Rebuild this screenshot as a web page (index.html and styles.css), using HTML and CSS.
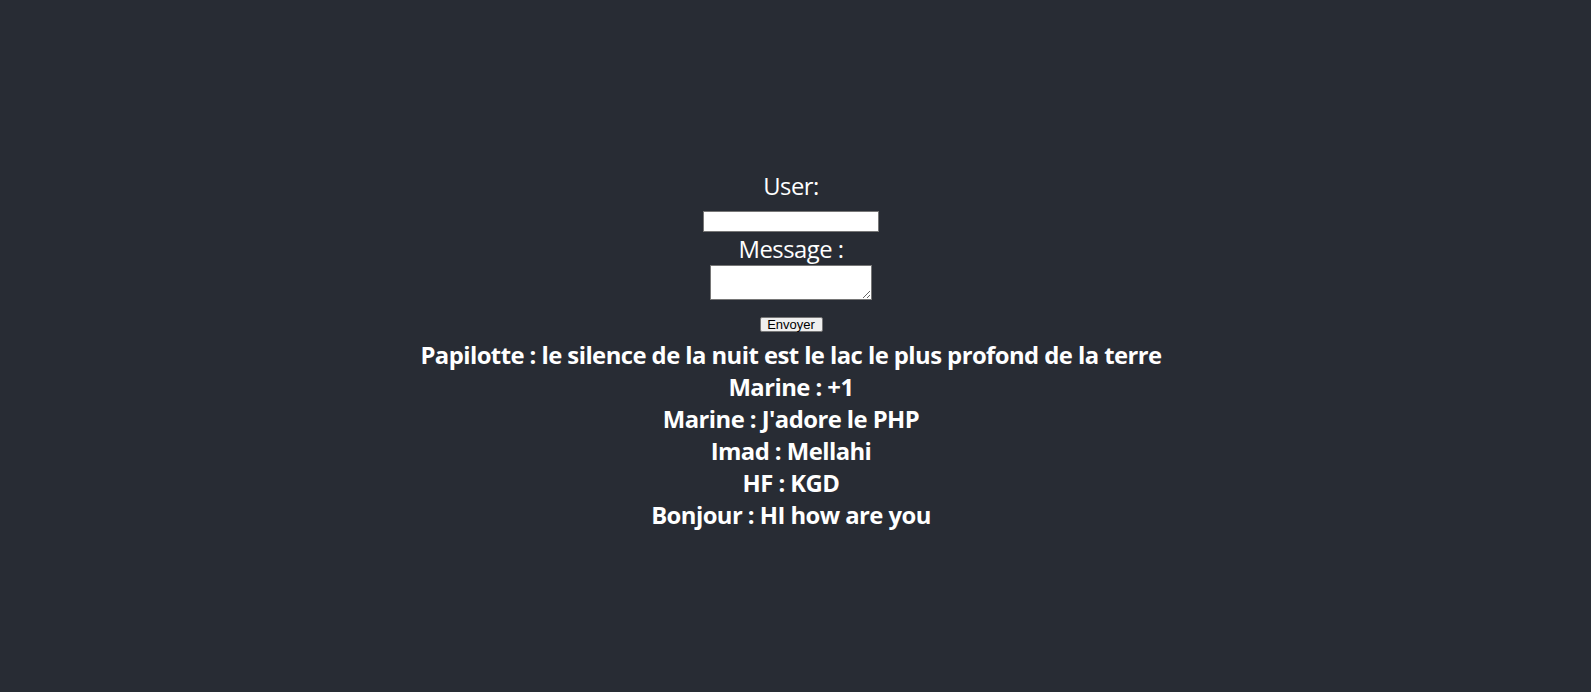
FILE: index.html
```html
<!DOCTYPE html>
<html lang="fr">
<head>
<meta charset="utf-8">
<title>Chat</title>
<link rel="stylesheet" href="styles.css">
</head>
<body>
<div class="app">
  <header class="app-header">
    <form class="chat-form">
      <label class="field-label" for="user">User:</label>
      <input class="user-input" id="user" type="text">
      <label class="field-label message-label" for="message">Message :</label>
      <textarea class="message-input" id="message"></textarea>
      <button class="send-button" type="button">Envoyer</button>
    </form>
    <div class="messages">
      <div class="message">Papilotte : le silence de la nuit est le lac le plus profond de la terre</div>
      <div class="message">Marine : +1</div>
      <div class="message">Marine : J'adore le PHP</div>
      <div class="message">Imad : Mellahi</div>
      <div class="message">HF : KGD</div>
      <div class="message">Bonjour : HI how are you</div>
    </div>
  </header>
</div>
</body>
</html>
```
FILE: styles.css
```css
html, body {
  margin: 0;
  padding: 0;
  background: #282c34;
}

.app {
  text-align: center;
}

.app-header {
  min-height: 100vh;
  box-sizing: border-box;
  padding: 8px 9px 0 0;
  display: flex;
  flex-direction: column;
  align-items: center;
  justify-content: center;
  background-color: #282c34;
  color: #ffffff;
  font-family: "Open Sans", "Noto Sans", "Liberation Sans", sans-serif;
  font-size: 23.84px;
  letter-spacing: -0.5px;
}

.chat-form {
  display: flex;
  flex-direction: column;
  align-items: center;
  margin: 0;
}

.field-label {
  display: block;
  line-height: 32px;
  height: 32px;
}

.user-input {
  box-sizing: border-box;
  width: 176px;
  height: 21px;
  margin: 9px 0 0 0;
  padding: 1px 2px;
  border: 1px solid #767676;
  background: #ffffff;
  font: 13.33px "Liberation Sans", Arial, sans-serif;
  letter-spacing: normal;
}

.message-label {
  margin-top: 1px;
}

.message-input {
  box-sizing: border-box;
  width: 162px;
  height: 35px;
  margin: 0;
  padding: 2px;
  border: 1px solid #767676;
  background: #ffffff;
  font: 13.33px "Liberation Mono", monospace;
  letter-spacing: normal;
}

.send-button {
  box-sizing: border-box;
  width: 63px;
  height: 15px;
  margin-top: 17px;
  padding: 0 6px;
  border: 1px solid #767676;
  border-radius: 2px;
  background: #efefef;
  color: #000000;
  font: 13px/13px "Liberation Sans", Arial, sans-serif;
  letter-spacing: normal;
}

.messages {
  margin-top: 7px;
}

.message {
  font-weight: 700;
  line-height: 32px;
  letter-spacing: -0.55px;
}
```
